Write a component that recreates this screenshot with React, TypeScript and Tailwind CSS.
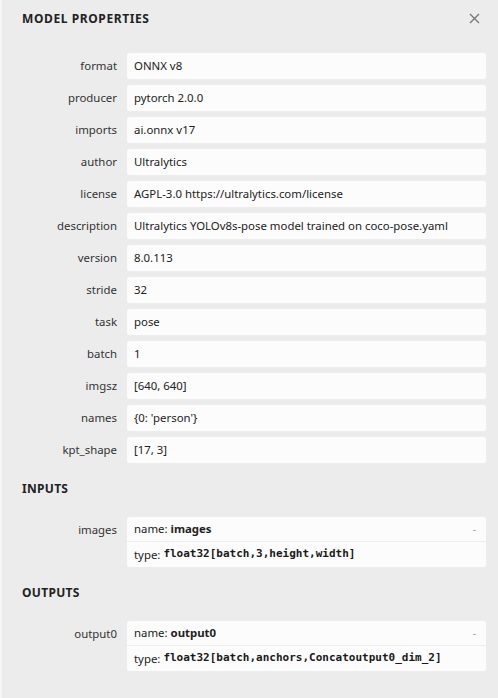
const properties: [string, string][] = [
  ['format', 'ONNX v8'],
  ['producer', 'pytorch 2.0.0'],
  ['imports', 'ai.onnx v17'],
  ['author', 'Ultralytics'],
  ['license', 'AGPL-3.0 https://ultralytics.com/license'],
  ['description', 'Ultralytics YOLOv8s-pose model trained on coco-pose.yaml'],
  ['version', '8.0.113'],
  ['stride', '32'],
  ['task', 'pose'],
  ['batch', '1'],
  ['imgsz', '[640, 640]'],
  ['names', "{0: 'person'}"],
  ['kpt_shape', '[17, 3]'],
];

const font = { fontFamily: '"Noto Sans", "Open Sans", sans-serif' };

function Label({ text }: { text: string }) {
  return (
    <div className="w-[115px] shrink-0 text-right text-[11.4px] leading-[26px] text-[#333]">
      {text}
    </div>
  );
}

function PropertyRow({ name, value }: { name: string; value: string }) {
  return (
    <div className="flex gap-[10px]">
      <Label text={name} />
      <div className="flex-1 h-[26px] rounded-[2px] bg-[#fcfcfc] px-[7px] text-[11.4px] leading-[26px] text-[#222]">
        {value}
      </div>
    </div>
  );
}

function ArgumentRow({ name, type }: { name: string; type: string }) {
  return (
    <div className="flex gap-[10px]">
      <Label text={name} />
      <div className="flex-1 rounded-[2px] bg-[#fcfcfc] text-[11.4px] text-[#222]">
        <div className="flex h-[25px] items-center justify-between px-[7px] border-b border-[#ededed]">
          <span>
            name: <b className="font-bold">{name}</b>
          </span>
          <span className="mr-[3px] text-[10px] leading-none text-[#999]">-</span>
        </div>
        <div className="flex h-[25px] items-center px-[7px]">
          <span>type:&nbsp;</span>
          <code
            className="text-[11px] font-bold text-[#1a1a1a]"
            style={{ fontFamily: '"DejaVu Sans Mono", "Liberation Mono", monospace' }}
          >
            {type}
          </code>
        </div>
      </div>
    </div>
  );
}

function SectionTitle({ text }: { text: string }) {
  return (
    <div className="mt-[17px] mb-[19px] pl-[20px] text-[12px] font-bold leading-[18px] tracking-[0.3px] text-[#222]">
      {text}
    </div>
  );
}

export default function App() {
  return (
    <div
      className="w-[498px] h-[698px] overflow-hidden bg-[#ececec] border-l-2 border-[#f6f6f6]"
      style={font}
    >
      {/* header */}
      <div className="flex h-[36px] items-center justify-between pl-[20px] pr-[18px] pt-[1px]">
        <div className="text-[12px] font-bold tracking-[0.6px] text-[#222]">MODEL PROPERTIES</div>
        <svg width="11" height="11" viewBox="0 0 11 11" className="text-[#777]">
          <path d="M1 1L10 10M10 1L1 10" stroke="currentColor" strokeWidth="1.4" />
        </svg>
      </div>

      <div className="pt-[17px] pr-[12px]">
        <div className="flex flex-col gap-[6px]">
          {properties.map(([k, v]) => (
            <PropertyRow key={k} name={k} value={v} />
          ))}
        </div>

        <SectionTitle text="INPUTS" />
        <ArgumentRow name="images" type="float32[batch,3,height,width]" />

        <SectionTitle text="OUTPUTS" />
        <ArgumentRow name="output0" type="float32[batch,anchors,Concatoutput0_dim_2]" />
      </div>
    </div>
  );
}
